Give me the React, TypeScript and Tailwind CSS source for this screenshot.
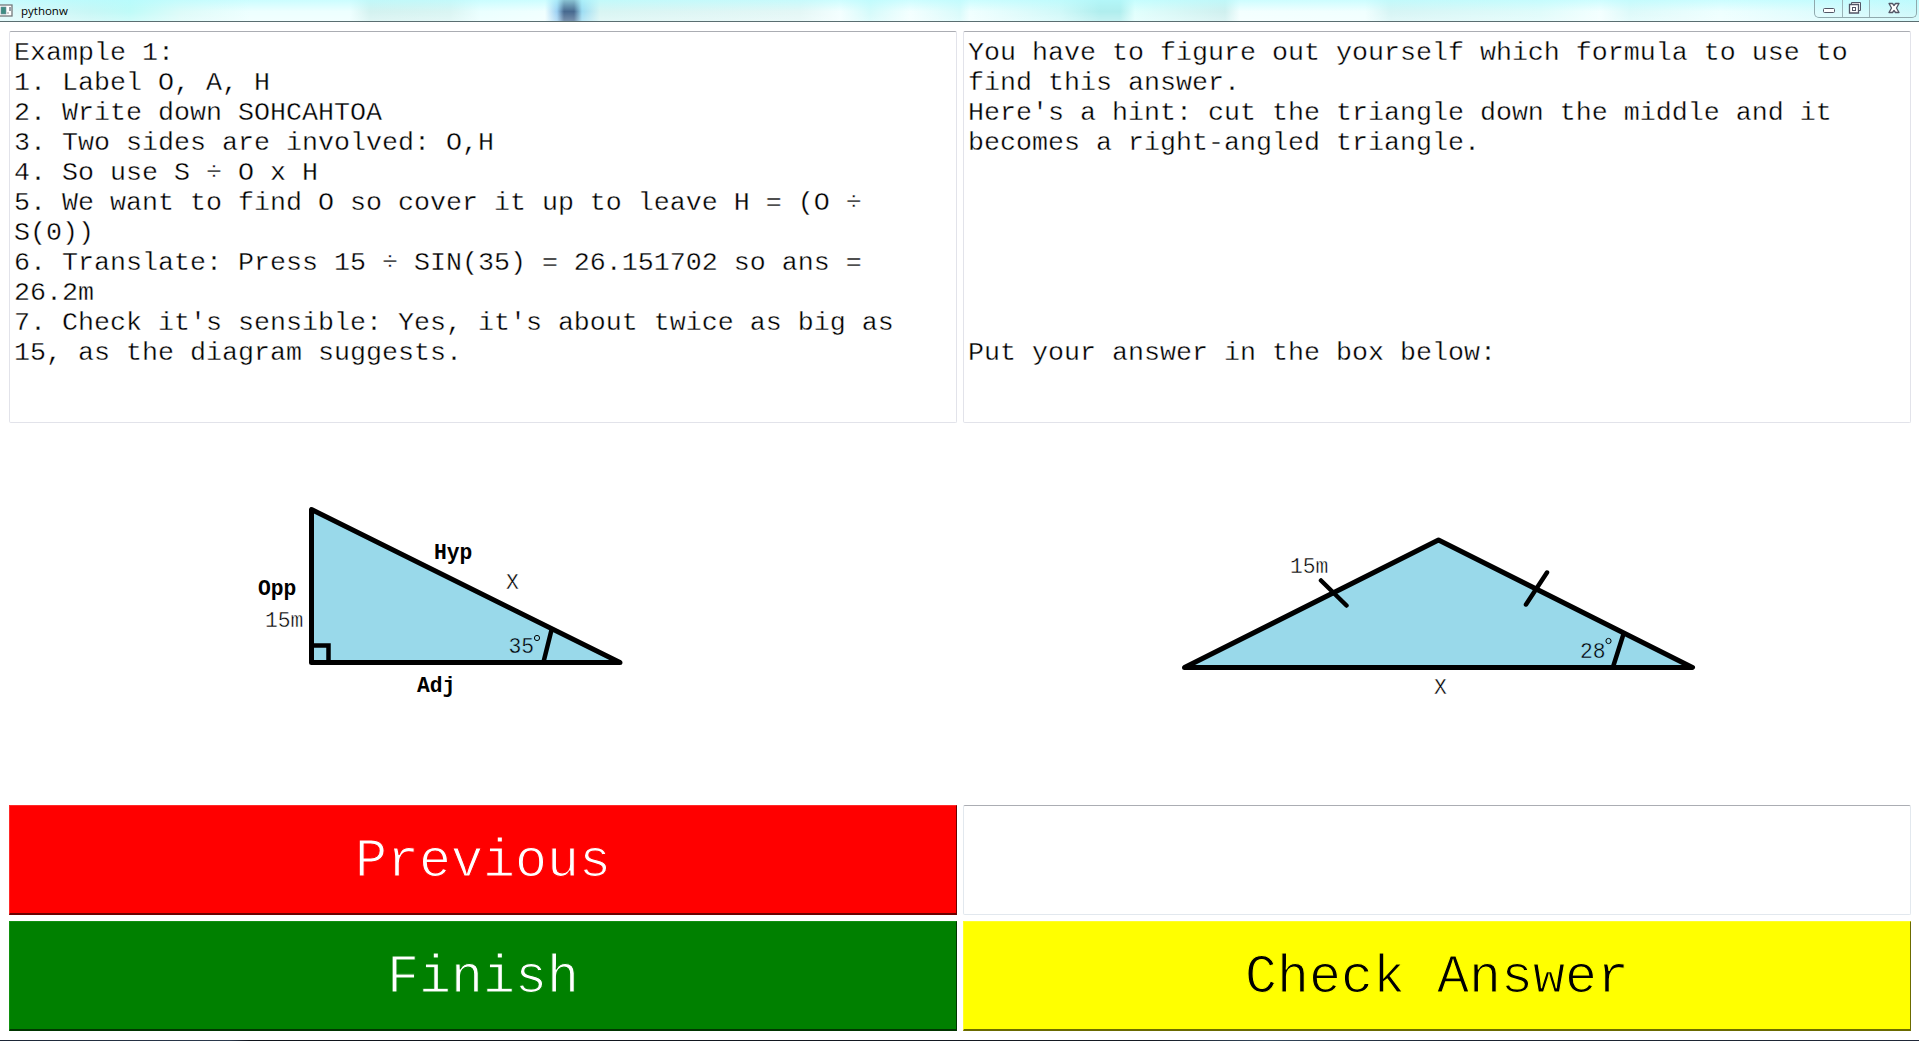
const MONO = "font-['Courier_New','Liberation_Mono',monospace]";

const exampleLines = [
  "Example 1:",
  "1. Label O, A, H",
  "2. Write down SOHCAHTOA",
  "3. Two sides are involved: O,H",
  "4. So use S ÷ O x H",
  "5. We want to find O so cover it up to leave H = (O ÷",
  "S(0))",
  "6. Translate: Press 15 ÷ SIN(35) = 26.151702 so ans =",
  "26.2m",
  "7. Check it's sensible: Yes, it's about twice as big as",
  "15, as the diagram suggests.",
];

const questionLines = [
  "You have to figure out yourself which formula to use to",
  "find this answer.",
  "Here's a hint: cut the triangle down the middle and it",
  "becomes a right-angled triangle.",
  "", "", "", "", "", "",
  "Put your answer in the box below:",
];

function TextPanel({ lines }: { lines: string[] }) {
  return (
    <section className="h-[392px] rounded-[2px] border border-[#e2e3ea] border-t-[#abadb3] bg-white pl-1 pt-[5.5px] text-[26.667px] leading-[30px] text-black [-webkit-text-stroke:0.35px_#fff]">
      {lines.map((line, i) => (
        <p key={i} className="h-[30px] whitespace-pre">{line}</p>
      ))}
    </section>
  );
}

function RightTriangle() {
  return (
    <svg width="948" height="382" viewBox="9 423 948 382" fontSize="21.333" fill="#000">
      <path d="M311.5 509.5V662.5H620Z" fill="#99d9ea" stroke="#000" strokeWidth="5" strokeLinejoin="round" />
      <path d="M311.5 645.5H328.5V662.5M551.5 630L543.5 662" fill="none" stroke="#000" strokeWidth="4.5" />
      <g fontWeight="bold">
        <text x="434" y="559">Hyp</text>
        <text x="258" y="595">Opp</text>
        <text x="417" y="692">Adj</text>
      </g>
      <g stroke="#fff" strokeWidth="0.4">
        <text x="506" y="589">X</text>
        <text x="265" y="627">15m</text>
      </g>
      <text x="508.5" y="652.5" stroke="#99d9ea" strokeWidth="0.4">35</text>
      <circle cx="537" cy="638" r="2.6" fill="none" stroke="#000" />
    </svg>
  );
}

function IsoscelesTriangle() {
  return (
    <svg width="948" height="382" viewBox="963 423 948 382" fontSize="21.333" fill="#000">
      <path d="M1184.5 667.5L1438.5 540L1692.5 667.5Z" fill="#99d9ea" stroke="#000" strokeWidth="5" strokeLinejoin="round" />
      <path d="M1321.5 580.5L1347 605.5M1547.5 572.5L1526.5 604.5M1624 634L1613.5 667" fill="none" stroke="#000" strokeWidth="4.5" strokeLinecap="round" transform="translate(-0.5 0)" />
      <g stroke="#fff" strokeWidth="0.4">
        <text x="1290" y="573">15m</text>
        <text x="1434" y="694">X</text>
      </g>
      <text x="1580" y="658" stroke="#99d9ea" strokeWidth="0.4">28</text>
      <circle cx="1608.5" cy="641" r="2.6" fill="none" stroke="#000" />
    </svg>
  );
}

function TitleBar() {
  return (
    <header className="flex h-[21px] shrink-0 items-start justify-between bg-[linear-gradient(180deg,#b4fcff99_0%,#ffffff00_55%,#ffffff44_100%),linear-gradient(90deg,#dffafb_0px,#c8f7f6_90px,#bffbf8_130px,#dcfbf9_180px,#edffff_250px,#edffff_350px,#d3f2f0_370px,#d9f5f3_450px,#eaffff_480px,#f0ffff_545px,#9cd0f2_557px,#47698f_564px,#47698f_574px,#9cdcf2_582px,#d8f5f3_600px,#e3f7f6_800px,#f3ffff_840px,#d4fbfb_870px,#f3ffff_910px,#d8fbfb_960px,#f0ffff_970px,#d0f9f9_1060px,#b0eeee_1100px,#b0eeee_1120px,#e0fffd_1135px,#cff0ef_1225px,#f3ffff_1240px,#f0ffff_1365px,#d6f5f5_1390px,#dffcfb_1540px,#f3ffff_1600px,#dcfafa_1630px,#eeffff_1720px,#ccf9fb_1919px)]">
      <div className="flex h-[21px] items-center pt-px font-['Open_Sans',sans-serif] text-[11.5px] text-black">
        <svg width="15" height="14" viewBox="0 0 15 14" className="mr-[6px]">
          <rect x="-2" y="1" width="14" height="11" fill="#fff" stroke="#75787c" strokeWidth="1.3" />
          <rect x="1" y="3" width="5" height="7" fill="#3f8d83" stroke="#6f8f9a" strokeWidth="0.6" />
          <rect x="7" y="8" width="2" height="2" fill="#ccc" />
          <rect x="9.5" y="3" width="1" height="4" fill="#345" />
        </svg>
        <span>pythonw</span>
      </div>
      <div className="mr-[2px] flex h-[18px] w-[103px] rounded-b-[5px] border border-t-0 border-[#8fa9ad]">
        <svg width="101" height="17" viewBox="0 0 101 17" fill="none">
          <path d="M27.5 0V17M54.5 0V17" stroke="#9ab4b8" />
          <rect x="8.5" y="8.5" width="11" height="4" rx="1" fill="#fff" stroke="#535666" />
          <path d="M36.5 2.500H45.5V10.5H36.5Z" fill="#fff" stroke="#535666" />
          <path d="M34.5 4.5H43.5V13H34.5Z" fill="#fff" stroke="#535666" strokeWidth="1.3" />
          <rect x="37.5" y="7.5" width="3" height="3" fill="#fff" stroke="#535666" />
          <path d="M74 3.5H77.5L79 5.5L80.5 3.5H84L81.5 8L84 12.5H80.5L79 10.5L77.5 12.5H74L76.5 8Z" fill="#fff" stroke="#535666" strokeWidth="1.3" strokeLinejoin="round" />
        </svg>
      </div>
    </header>
  );
}

const BUTTON = "h-[110px] border border-b-2 pt-[7px] text-[53.333px] leading-none";

export default function App() {
  return (
    <div className={`flex h-[1041px] w-[1919px] flex-col overflow-hidden bg-white ${MONO}`}>
      <TitleBar />
      <div className="h-px shrink-0 bg-[#5a6e71]" />
      <main className="grid h-[1018px] grid-cols-[948px_948px] content-start gap-x-[6px] pl-[9px] pt-[9px]">
        <TextPanel lines={exampleLines} />
        <TextPanel lines={questionLines} />
        <RightTriangle />
        <IsoscelesTriangle />
        <button className={`${BUTTON} mb-[6px] border-[#ff2a2a] border-r-[#6b0000] border-b-[#6b0000] bg-[#ff0000] text-white [-webkit-text-stroke:1.1px_#f00]`}>Previous</button>
        <input aria-label="Answer" className="h-[110px] rounded-[2px] border border-[#e2e8ee] border-t-[#abadb3] bg-white px-2 text-[53.333px]" />
        <button className={`${BUTTON} border-[#109010] border-r-[#003600] border-b-[#003600] bg-[#008000] text-white [-webkit-text-stroke:1.1px_#008000]`}>Finish</button>
        <button className={`${BUTTON} border-[#ffff2a] border-r-[#6b6b00] border-b-[#6b6b00] bg-[#ffff00] text-black [-webkit-text-stroke:1.1px_#ff0]`}>Check Answer</button>
      </main>
      <footer className="h-px shrink-0 bg-[linear-gradient(90deg,#1c2636_0%,#2c3a4e_12%,#10141c_13%,#151a24_60%,#33475c_66%,#1a2230_76%,#202838_100%)]" />
    </div>
  );
}
